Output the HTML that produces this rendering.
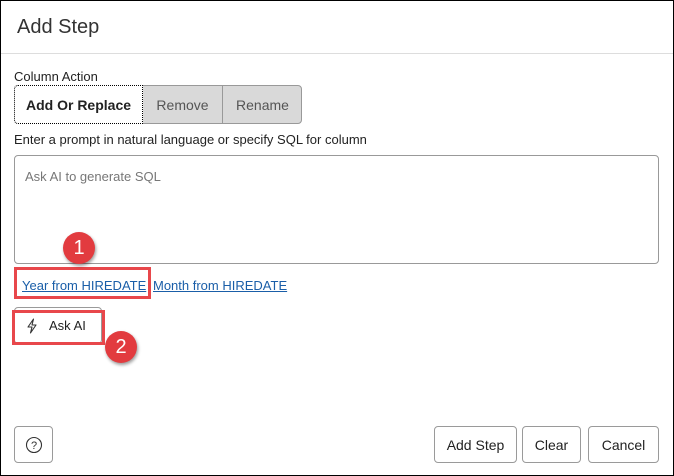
<!DOCTYPE html>
<html><head><style>
body{margin:0;width:674px;height:476px;overflow:hidden;font-family:"Liberation Sans",sans-serif;background:#fff}
.frame{position:absolute;left:0;top:0;width:672px;height:474px;border:1px solid #000}
.a{position:absolute}
.btn{position:absolute;border:1px solid #9a9a9a;border-radius:4px;background:#fff;font-size:14px;color:#222;display:flex;align-items:center;justify-content:center;box-sizing:border-box}
.badge{position:absolute;width:32px;height:32px;border-radius:50%;background:#e23b3f;color:#fff;font-size:20px;display:flex;align-items:center;justify-content:center;box-shadow:1px 2px 3px rgba(0,0,0,.4)}
.red{position:absolute;border:3px solid #e8474b;box-sizing:border-box}
a{color:#1a5ea8;text-decoration:underline;font-size:13px}
</style></head><body>
<div class="frame"></div>
<div class="a" style="left:17px;top:16px;font-size:20px;color:#333">Add Step</div>
<div class="a" style="left:1px;top:53px;width:672px;height:1px;background:#ddd"></div>
<div class="a" style="left:14px;top:69px;font-size:13px;color:#222">Column Action</div>
<div class="a" style="left:14px;top:85px;width:288px;height:39px;border:1px solid #999;border-radius:4px;background:#d9d9d9;box-sizing:border-box"></div>
<div class="a" style="left:14px;top:85px;width:129px;height:39px;border:1px dotted #000;border-radius:4px 0 0 4px;background:#fff;box-sizing:border-box;font-size:14px;font-weight:bold;color:#222;display:flex;align-items:center;justify-content:center">Add Or Replace</div>
<div class="a" style="left:143px;top:86px;width:79px;height:37px;font-size:14px;color:#555;display:flex;align-items:center;justify-content:center">Remove</div>
<div class="a" style="left:222px;top:86px;width:1px;height:37px;background:#999"></div>
<div class="a" style="left:223px;top:86px;width:79px;height:37px;font-size:14px;color:#555;display:flex;align-items:center;justify-content:center">Rename</div>
<div class="a" style="left:14px;top:132px;font-size:13px;color:#222">Enter a prompt in natural language or specify SQL for column</div>
<div class="a" style="left:14px;top:155px;width:645px;height:109px;border:1px solid #999;border-radius:4px;box-sizing:border-box"></div>
<div class="a" style="left:25px;top:169px;font-size:13px;color:#777">Ask AI to generate SQL</div>
<div class="a" style="left:22px;top:277px"><a>Year from HIREDATE</a></div>
<div class="a" style="left:153px;top:277px"><a>Month from HIREDATE</a></div>
<div class="red" style="left:14px;top:267px;width:137px;height:32px"></div>
<div class="badge" style="left:63px;top:232px">1</div>
<div class="btn" style="left:14px;top:307px;width:88px;height:37px;justify-content:flex-start;padding-left:10px;font-size:13px">
<svg width="14" height="16" viewBox="0 0 14 16" style="margin-right:10px"><path d="M8.5 1 L3 9 H7 L5.5 15 L11 7 H7 Z" fill="none" stroke="#333" stroke-width="1.1" stroke-linejoin="round"/></svg>Ask AI</div>
<div class="red" style="left:12px;top:310px;width:93px;height:35px"></div>
<div class="badge" style="left:105px;top:331px">2</div>
<div class="btn" style="left:14px;top:426px;width:39px;height:37px"><svg width="18" height="18" viewBox="0 0 18 18"><circle cx="9" cy="9" r="7.5" fill="none" stroke="#333" stroke-width="1.1"/><text x="9" y="13" font-size="11" text-anchor="middle" fill="#333" font-family="Liberation Sans">?</text></svg></div>
<div class="btn" style="left:434px;top:426px;width:83px;height:37px">Add Step</div>
<div class="btn" style="left:522px;top:426px;width:59px;height:37px">Clear</div>
<div class="btn" style="left:588px;top:426px;width:71px;height:37px">Cancel</div>
</body></html>
